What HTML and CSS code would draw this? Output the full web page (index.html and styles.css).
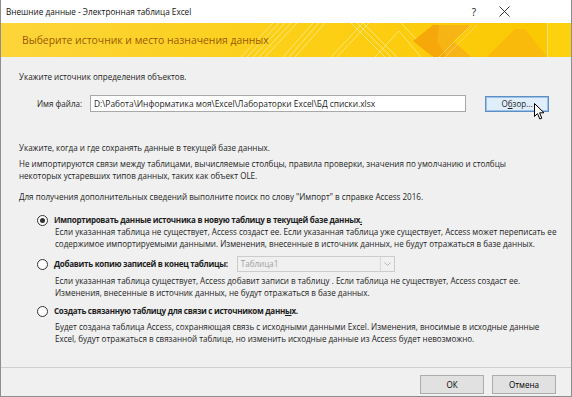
FILE: index.html
```html
<!DOCTYPE html>
<html lang="ru">
<head>
    <meta charset="UTF-8">
    <title>Внешние данные - Электронная таблица Excel</title>
    <link rel="stylesheet" href="styles.css">
</head>
<body>
<div class="window">
    <!-- Title bar -->
    <div class="titlebar">
        <span class="titlebar__text">Внешние данные - Электронная таблица Excel</span>
        <span class="titlebar__btn">?</span>
        <span class="titlebar__btn titlebar__btn--close">
            <svg width="11" height="11" viewBox="0 0 11 11"><path d="M0.5 0.5 L10.5 10.5 M10.5 0.5 L0.5 10.5" stroke="#222" stroke-width="0.9" fill="none"/></svg>
        </span>
    </div>

    <!-- Banner -->
    <div class="banner">
        <svg class="banner__art" width="572" height="34" viewBox="0 0 572 34">
            <defs>
                <linearGradient id="bg" x1="0" y1="0" x2="1" y2="0">
                    <stop offset="0" stop-color="#fdd53a"/>
                    <stop offset="0.5" stop-color="#fccf18"/>
                    <stop offset="1" stop-color="#fbc800"/>
                </linearGradient>
            </defs>
            <rect width="572" height="34" fill="url(#bg)"/>
            <g stroke="#fff2a8" stroke-width="0.8" fill="none" opacity="0.8">
                <path d="M240 34 L272 0 M246 34 L278 0 M252 34 L284 0 M258 34 L290 0 M264 34 L296 0"/>
                <path d="M282 34 L312 0 M288 34 L318 0 M294 34 L324 0"/>
                <path d="M330 34 L362 0 M336 34 L368 0"/>
                <path d="M350 0 L384 34 M356 0 L390 34 M362 0 L396 34"/>
                <path d="M374 34 L398 8 L420 34"/>
                <path d="M400 0 L432 34"/>
            </g>
            <polygon points="412,18 432,2 470,2 452,18 470,34 432,34" fill="#f6a80a"/>
            <polygon points="438,2 470,2 452,18 470,34 446,34 436,18" fill="#f8b818" opacity="0.8"/>
            <g stroke="#fbd66a" stroke-width="0.8" fill="none">
                <path d="M438 34 L470 2 M444 34 L476 2"/>
            </g>
            <polygon points="486,34 514,6 524,6 546,34" fill="#f9b70e" opacity="0.85"/>
            <rect x="546" y="0" width="26" height="34" fill="#fcd20e"/>
            <rect x="546" y="0" width="1" height="34" fill="#fde37a"/>
        </svg>
        <h1 class="banner__title">Выберите источник и место назначения данных</h1>
    </div>

    <!-- Content -->
    <div class="content">
        <p class="text">Укажите источник определения объектов.</p>

        <div class="file-row">
            <span class="file-row__label">Имя файла:</span>
            <div class="field">D:\Работа\Информатика моя\Excel\Лабораторки Excel\БД списки.xlsx</div>
            <span class="btn btn--browse">О<u>б</u>зор...</span>
            <svg class="cursor" width="12" height="18" viewBox="0 0 12 18">
                <path d="M0.5 0.5 L0.5 13.5 L3.5 10.5 L5.8 16 L7.8 15.2 L5.6 9.8 L10 9.8 Z" fill="#fff" stroke="#000" stroke-width="1" stroke-linejoin="miter"/>
            </svg>
        </div>

        <p class="text text--gap">Укажите, когда и где сохранять данные в текущей базе данных.</p>
        <p class="text text--near">Не импортируются связи между таблицами, вычисляемые столбцы, правила проверки, значения по умолчанию и столбцы<br>некоторых устаревших типов данных, таких как объект OLE.</p>
        <p class="text text--mid">Для получения дополнительных сведений выполните поиск по слову "Импорт" в справке Access 2016.</p>

        <div class="option option--first">
            <div class="option__head">
                <span class="radio radio--checked"></span>
                <span class="option__label">Импортировать данные источника в новую таблицу в текущей базе данных<u>.</u></span>
            </div>
            <p class="option__desc">Если указанная таблица не существует, Access создаст ее. Если указанная таблица уже существует, Access может переписать ее<br>содержимое импортируемыми данными. Изменения, внесенные в источник данных, не будут отражаться в базе данных.</p>
        </div>

        <div class="option">
            <div class="option__head">
                <span class="radio"></span>
                <span class="option__label">Добавить копию записей в конец таблицы:</span>
                <div class="combo">
                    <span class="combo__value">Таблица1</span>
                    <span class="combo__arrow">
                        <svg width="7" height="4" viewBox="0 0 7 4"><path d="M0.5 0.5 L3.5 3.5 L6.5 0.5" stroke="#b5b5b5" fill="none"/></svg>
                    </span>
                </div>
            </div>
            <p class="option__desc">Если указанная таблица существует, Access добавит записи в таблицу . Если таблица не существует, Access создаст ее.<br>Изменения, внесенные в источник данных, не будут отражаться в базе данных.</p>
        </div>

        <div class="option">
            <div class="option__head">
                <span class="radio"></span>
                <span class="option__label">Создать связанную таблицу для связи с источником данн<u>ы</u>х.</span>
            </div>
            <p class="option__desc option__desc--last">Будет создана таблица Access, сохраняющая связь с исходными данными Excel. Изменения, вносимые в исходные данные<br>Excel, будут отражаться в связанной таблице, но изменить исходные данные из Access будет невозможно.</p>
        </div>
    </div>

    <!-- Footer -->
    <div class="footer">
        <span class="btn">ОК</span>
        <span class="btn">Отмена</span>
    </div>
</div>
</body>
</html>
```

FILE: styles.css
```css
:root {
    /* COLORS */
    --face: #f0f0f0;
    --text: #1e1e1e;
    --frame: #8e8e8e;
    --line: #cfcfcf;
    --banner-text: #9b5a00;

    font-family: "Open Sans", "Noto Sans", sans-serif;
    font-size: 8.05px;
}

body {
    margin: 0;
    background-color: var(--face);
}

.window {
    background-color: var(--face);
    border: 1px solid var(--frame);
    border-top: none;
    box-sizing: border-box;
    display: flex;
    flex-direction: column;
    height: 397px;
    width: 572px;
}

/* TITLE BAR */
.titlebar {
    align-items: center;
    background-color: #fff;
    color: #111;
    display: flex;
    font-size: 8.2px;
    height: 23px;
    padding-left: 5px;
}

.titlebar__text {
    flex: 1;
}

.titlebar__btn {
    align-items: center;
    display: flex;
    font-size: 10px;
    height: 23px;
    justify-content: center;
    width: 30px;
}

.titlebar__btn--close {
    margin-right: 52px;
}

/* BANNER */
.banner {
    height: 34px;
    overflow: hidden;
    position: relative;
}

.banner__art {
    left: 0;
    position: absolute;
    top: 0;
}

.banner__title {
    color: var(--banner-text);
    font-size: 10.4px;
    font-weight: 400;
    line-height: 34px;
    margin: 0;
    padding-left: 21px;
    position: relative;
}

/* CONTENT */
.content {
    color: var(--text);
    flex: 1;
    line-height: 12px;
    padding: 14px 0 0 18px;
    white-space: nowrap;
}

.text {
    margin: 0;
}

.text--gap {
    margin-top: 30px;
}

.text--near {
    margin-top: 4px;
}

.text--mid {
    margin-top: 9px;
}

.file-row {
    align-items: center;
    display: flex;
    height: 17px;
    margin-top: 12px;
    position: relative;
}

.file-row__label {
    padding-left: 18px;
    width: 53px;
}

.field {
    background-color: #fff;
    border: 1px solid #a9a9a9;
    box-sizing: border-box;
    font-size: 8.4px;
    height: 17px;
    line-height: 15px;
    padding-left: 3px;
    width: 376px;
}

.btn {
    align-items: center;
    background-color: #e1e1e1;
    border: 1px solid #adadad;
    box-sizing: border-box;
    display: flex;
    height: 19px;
    justify-content: center;
    width: 64px;
}

.btn--browse {
    background-color: #e0eefb;
    border: 1px solid #5b8fc7;
    box-shadow: inset 0 0 0 1px #9cc0e6;
    height: 16px;
    margin-left: 19px;
}

.cursor {
    left: 515px;
    position: absolute;
    top: 8px;
}

/* OPTIONS */
.option {
    margin-top: 6px;
}

.option--first {
    margin-top: 11px;
}

.option__head {
    align-items: center;
    display: flex;
    min-height: 12px;
    padding-left: 18px;
}

.option__label {
    font-weight: 700;
    letter-spacing: -0.3px;
}

.option__desc {
    margin: 0 0 0 36px;
}

.option + .option .option__desc {
    margin-top: 3px;
}

.option + .option .option__desc--last {
    margin-top: 4px;
}

.radio {
    background-color: #fff;
    border: 1px solid #333;
    border-radius: 50%;
    box-sizing: border-box;
    flex: none;
    height: 11px;
    margin-right: 6px;
    position: relative;
    width: 11px;
}

.radio--checked::after {
    background-color: #333;
    border-radius: 50%;
    content: "";
    height: 5px;
    left: 2px;
    position: absolute;
    top: 2px;
    width: 5px;
}

.combo {
    align-items: center;
    background-color: #f0f0f0;
    border: 1px solid #cccccc;
    box-sizing: border-box;
    display: flex;
    height: 16px;
    margin-left: 9px;
    width: 158px;
}

.combo__value {
    color: #a0a0a0;
    flex: 1;
    padding-left: 3px;
}

.combo__arrow {
    align-items: center;
    border-left: 1px solid #d8d8d8;
    display: flex;
    height: 14px;
    justify-content: center;
    width: 13px;
}

/* FOOTER */
.footer {
    border-top: 1px solid var(--line);
    box-sizing: border-box;
    display: flex;
    gap: 8px;
    height: 29px;
    justify-content: flex-end;
    padding: 7px 15px 0 0;
}
```
